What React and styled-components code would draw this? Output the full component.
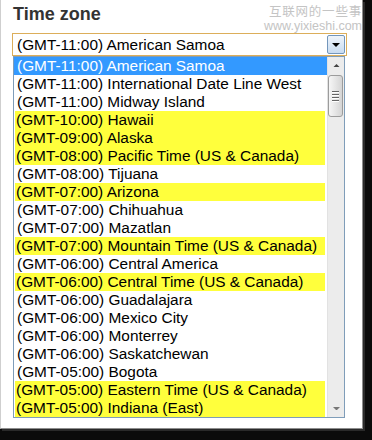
import React from 'react';
import styled, { createGlobalStyle } from 'styled-components';

const GlobalStyle = createGlobalStyle`
  html, body {
    margin: 0;
    padding: 0;
    background: #0b0b0b;
  }
  body {
    width: 372px;
    height: 440px;
    overflow: hidden;
    font-family: "Liberation Sans", Arial, sans-serif;
  }
`;

const Panel = styled.div`
  position: relative;
  box-sizing: border-box;
  width: 363px;
  height: 429px;
  padding: 3px 0 0 11px;
  background: #ffffff;
  border-left: 1px solid #cfcfcf;
  border-right: 1px solid #8d8d8d;
  border-bottom: 1px solid #8d8d8d;
  box-shadow: 2px 2px 0 #2a2a2a;
`;

const Title = styled.h2`
  margin: 0 0 8px 1px;
  font-size: 18px;
  line-height: 22px;
  font-weight: bold;
  color: #333333;
`;

const Select = styled.div`
  box-sizing: border-box;
  display: flex;
  align-items: center;
  width: 335px;
  height: 23px;
  padding: 1px 1px 1px 4px;
  border: 1px solid #dcae5a;
  font-size: 15.4px;
  color: #000;
`;

const SelectText = styled.span`
  flex: 1;
  white-space: nowrap;
`;

const DropButton = styled.div`
  box-sizing: border-box;
  display: flex;
  align-items: center;
  justify-content: center;
  width: 18px;
  height: 19px;
  border: 1px solid #7396bb;
  border-radius: 2px;
  background: linear-gradient(#eef4fb, #c9dcf1);
`;

const List = styled.div`
  box-sizing: border-box;
  display: flex;
  width: 332px;
  height: 362px;
  margin-left: 1px;
  border: 1px solid #7f9db9;
  overflow: hidden;
  background: #fff;
`;

const Options = styled.div`
  flex: 1;
  display: flex;
  flex-direction: column;
`;

const Option = styled.div`
  flex: 0 0 18px;
  height: 18px;
  line-height: 18px;
  font-size: 15.4px;
  white-space: nowrap;
  padding-left: ${({ $mark }) => ($mark ? '1px' : '3px')};
  margin: ${({ $mark }) => ($mark ? '0 2px 0 1px' : '0')};
  color: ${({ $selected }) => ($selected ? '#ffffff' : '#000000')};
  background: ${({ $selected, $mark }) =>
    $selected ? '#3399ff' : $mark ? '#ffff3c' : 'transparent'};
`;

const Scrollbar = styled.div`
  box-sizing: border-box;
  display: flex;
  flex-direction: column;
  width: 17px;
  background: #ececec;
  border-left: 1px solid #e2e2e2;
`;

const Arrow = styled.div`
  display: flex;
  align-items: center;
  justify-content: center;
  height: 17px;
`;

const Track = styled.div`
  flex: 1;
  padding: 1px 0 0 0;
`;

const Thumb = styled.div`
  box-sizing: border-box;
  display: flex;
  flex-direction: column;
  align-items: center;
  justify-content: center;
  gap: 2px;
  width: 15px;
  height: 42px;
  border: 1px solid #9c9c9c;
  border-radius: 3px;
  background: linear-gradient(90deg, #f6f6f6, #e2e2e2 60%, #d4d4d4);
`;

const Grip = styled.span`
  display: block;
  width: 7px;
  height: 1px;
  background: #666;
  box-shadow: 0 1px 0 #fff;
`;

const Watermark = styled.div`
  position: absolute;
  top: 1px;
  right: 0;
  display: flex;
  flex-direction: column;
  align-items: flex-end;
  color: #c4c4c4;
  white-space: nowrap;
  pointer-events: none;
`;

const WatermarkCn = styled.span`
  font-family: "Noto Sans CJK SC", sans-serif;
  font-size: 12.5px;
  line-height: normal;
  letter-spacing: 0.8px;
`;

const WatermarkUrl = styled.span`
  font-family: "Liberation Sans", Arial, sans-serif;
  font-size: 12.5px;
  line-height: 13px;
`;

const zones = [
  ['(GMT-11:00) American Samoa', false],
  ['(GMT-11:00) International Date Line West', false],
  ['(GMT-11:00) Midway Island', false],
  ['(GMT-10:00) Hawaii', true],
  ['(GMT-09:00) Alaska', true],
  ['(GMT-08:00) Pacific Time (US & Canada)', true],
  ['(GMT-08:00) Tijuana', false],
  ['(GMT-07:00) Arizona', true],
  ['(GMT-07:00) Chihuahua', false],
  ['(GMT-07:00) Mazatlan', false],
  ['(GMT-07:00) Mountain Time (US & Canada)', true],
  ['(GMT-06:00) Central America', false],
  ['(GMT-06:00) Central Time (US & Canada)', true],
  ['(GMT-06:00) Guadalajara', false],
  ['(GMT-06:00) Mexico City', false],
  ['(GMT-06:00) Monterrey', false],
  ['(GMT-06:00) Saskatchewan', false],
  ['(GMT-05:00) Bogota', false],
  ['(GMT-05:00) Eastern Time (US & Canada)', true],
  ['(GMT-05:00) Indiana (East)', true],
];

const Tri = ({ up, color = '#000', w = 8 }) => (
  <svg width={w} height={w / 2} viewBox="0 0 8 4">
    {up ? (
      <polygon points="0,4 8,4 4,0" fill={color} />
    ) : (
      <polygon points="0,0 8,0 4,4" fill={color} />
    )}
  </svg>
);

const App = () => (
  <>
    <GlobalStyle />
    <Panel>
      <Title>Time zone</Title>
      <Select>
        <SelectText>(GMT-11:00) American Samoa</SelectText>
        <DropButton>
          <Tri w={8} />
        </DropButton>
      </Select>
      <List>
        <Options>
          {zones.map(([label, mark], idx) => (
            <Option key={idx} $selected={idx === 0} $mark={mark}>
              {label}
            </Option>
          ))}
        </Options>
        <Scrollbar>
          <Arrow>
            <Tri up w={7} color="#444" />
          </Arrow>
          <Track>
            <Thumb>
              <Grip />
              <Grip />
              <Grip />
              <Grip />
            </Thumb>
          </Track>
          <Arrow>
            <Tri w={7} color="#777" />
          </Arrow>
        </Scrollbar>
      </List>
      <Watermark>
        <WatermarkCn>互联网的一些事</WatermarkCn>
        <WatermarkUrl>www.yixieshi.com</WatermarkUrl>
      </Watermark>
    </Panel>
  </>
);

export default App;
